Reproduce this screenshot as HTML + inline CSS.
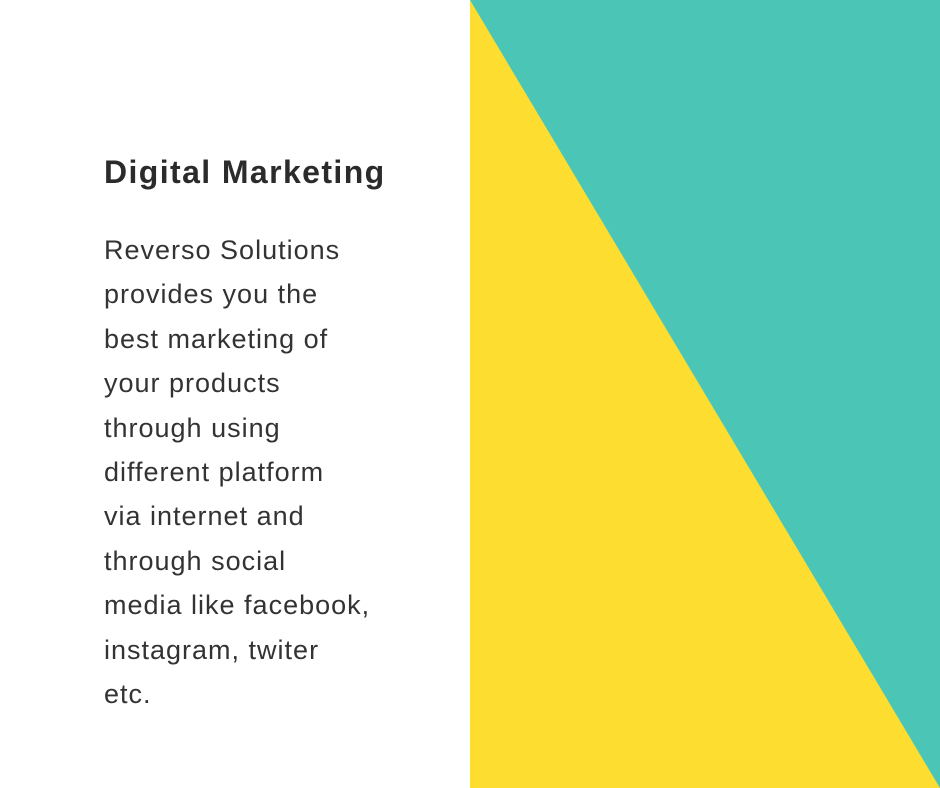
<!DOCTYPE html>
<html><head><meta charset="utf-8"><style>
html,body{margin:0;padding:0;width:940px;height:788px;overflow:hidden;background:#fff;}
.h{position:absolute;left:104px;top:152px;font:bold 32px/40px "Liberation Sans",sans-serif;color:#2b2b2b;letter-spacing:1.4px;}
.p{position:absolute;left:104px;top:228px;font:27px/44.4px "Liberation Sans",sans-serif;color:#333;letter-spacing:1px;white-space:nowrap;}
svg{position:absolute;left:470px;top:0;}
</style></head><body>
<div class="h">Digital Marketing</div>
<div class="p">Reverso Solutions<br>provides you the<br>best marketing of<br>your products<br>through using<br>different platform<br>via internet and<br>through social<br>media like facebook,<br>instagram, twiter<br>etc.</div>
<svg width="470" height="788" viewBox="0 0 470 788">
<rect width="470" height="788" fill="#fddd2f"/>
<polygon points="0,0 470,0 470,788" fill="#4bc6b6"/>
</svg>
</body></html>
